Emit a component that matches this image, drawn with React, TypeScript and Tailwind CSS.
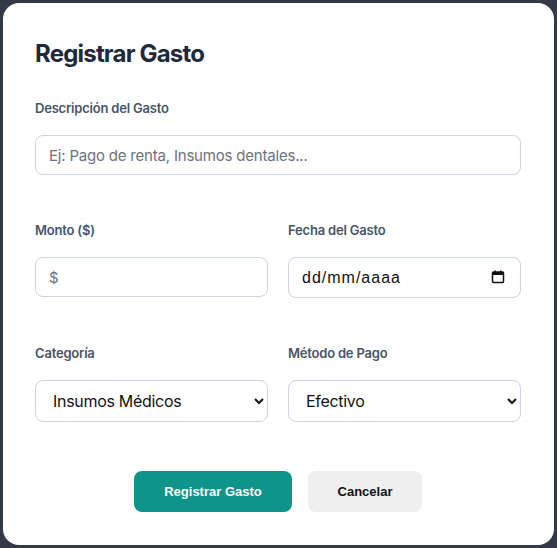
import { useState } from 'react';

const font = { fontFamily: 'Inter, "Noto Sans", sans-serif' };

function CalendarGlyph() {
  return (
    <svg width="14" height="14" viewBox="0 0 14 14" aria-hidden="true">
      <rect x="1.5" y="2" width="11" height="10.5" rx="1" fill="none" stroke="#111" strokeWidth="1.5" />
      <rect x="1.5" y="2" width="11" height="3" fill="#111" />
      <rect x="3.5" y="0.5" width="1.5" height="2.5" fill="#111" />
      <rect x="9" y="0.5" width="1.5" height="2.5" fill="#111" />
    </svg>
  );
}

export default function App() {
  const [descripcion, setDescripcion] = useState('');
  const [monto, setMonto] = useState('');
  const [fecha, setFecha] = useState('');
  const [categoria, setCategoria] = useState('insumos');
  const [metodo, setMetodo] = useState('efectivo');

  const labelClass = 'block text-[13px] font-semibold leading-5 text-[#475569] tracking-[-0.2px] mb-[17px]';
  const inputClass =
    'w-full h-10 border border-[#cbd5e1] rounded-lg px-[13px] text-[15px] text-[#1e293b] placeholder:text-[#6b7280] focus:outline-none tracking-[-0.2px]';
  const selectClass =
    'w-full h-[42px] border border-[#cbd5e1] rounded-lg pl-[13px] pr-2 text-[16px] text-[#111] tracking-[-0.3px]';

  return (
    <div className="min-h-screen bg-[#343946] p-[3px]" style={font}>
      <div className="w-[551px] bg-white rounded-2xl pt-[35px] pl-[32px] pr-[33px] pb-[33px]">
        <h2 className="text-[24px] leading-8 font-bold text-[#1e293b] tracking-[-0.8px] mb-[28px]">Registrar Gasto</h2>

        <div className="mb-[45px]">
          <label className={labelClass}>Descripción del Gasto</label>
          <input
            type="text"
            value={descripcion}
            onChange={(e) => setDescripcion(e.target.value)}
            placeholder="Ej: Pago de renta, Insumos dentales..."
            className={inputClass}
          />
        </div>

        <div className="grid grid-cols-2 gap-5 mb-[45px]">
          <div>
            <label className={labelClass}>Monto ($)</label>
            <input
              type="text"
              value={monto}
              onChange={(e) => setMonto(e.target.value)}
              placeholder="$"
              className={inputClass}
            />
          </div>
          <div>
            <label className={labelClass}>Fecha del Gasto</label>
            {/* fake date field so the format reads dd/mm/aaaa */}
            <div className="relative">
              <input
                type="text"
                value={fecha}
                onChange={(e) => setFecha(e.target.value)}
                placeholder="dd/mm/aaaa"
                className="w-full h-[41px] border border-[#cbd5e1] rounded-lg px-[13px] text-[16px] tracking-[1px] text-[#111] placeholder:text-[#111] focus:outline-none"
                style={{ fontFamily: '"Liberation Sans", Arial, sans-serif' }}
              />
              <span className="absolute right-[16px] top-[13px] pointer-events-none">
                <CalendarGlyph />
              </span>
            </div>
          </div>
        </div>

        <div className="grid grid-cols-2 gap-5 mb-[49px]">
          <div>
            <label className={labelClass}>Categoría</label>
            <select value={categoria} onChange={(e) => setCategoria(e.target.value)} className={selectClass}>
              <option value="insumos">Insumos Médicos</option>
              <option value="renta">Renta</option>
              <option value="servicios">Servicios</option>
              <option value="otros">Otros</option>
            </select>
          </div>
          <div>
            <label className={labelClass}>Método de Pago</label>
            <select value={metodo} onChange={(e) => setMetodo(e.target.value)} className={selectClass}>
              <option value="efectivo">Efectivo</option>
              <option value="tarjeta">Tarjeta</option>
              <option value="transferencia">Transferencia</option>
            </select>
          </div>
        </div>

        <div className="flex justify-center gap-4" style={{ fontFamily: '"Liberation Sans", Arial, sans-serif' }}>
          <button className="w-[158px] h-[41px] rounded-lg bg-[#0e9488] text-white text-[13px] font-bold">
            Registrar Gasto
          </button>
          <button className="w-[114px] h-[41px] rounded-lg bg-[#efefef] text-[#111] text-[13px] font-bold">
            Cancelar
          </button>
        </div>
      </div>
    </div>
  );
}
